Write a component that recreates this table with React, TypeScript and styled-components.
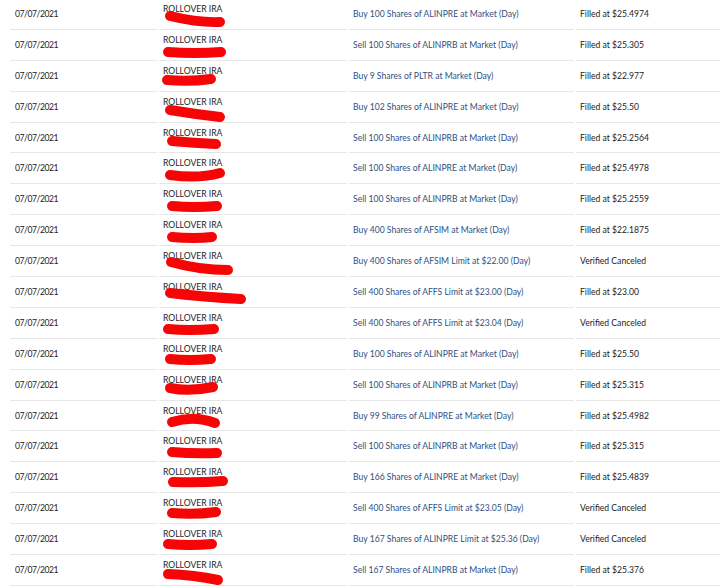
import styled, { createGlobalStyle } from "styled-components";

const GlobalStyle = createGlobalStyle`
  html, body {
    margin: 0;
    padding: 0;
    background: #ffffff;
    overflow: hidden;
  }
  body {
    font-family: Lato, "Open Sans", "Liberation Sans", sans-serif;
  }
`;

interface Order {
  description: string;
  status: string;
  // scribble: start x, start y, control x, control y, end x, end y (cell coords)
  mark: number[];
}

const orders: Order[] = [
  { description: "Buy 100 Shares of ALINPRE at Market (Day)", status: "Filled at $25.4974", mark: [11, 17, 40, 24, 61, 23] },
  { description: "Sell 100 Shares of ALINPRB at Market (Day)", status: "Filled at $25.305", mark: [9, 22, 35, 24, 62, 22] },
  { description: "Buy 9 Shares of PLTR at Market (Day)", status: "Filled at $22.977", mark: [8, 19, 30, 21, 52, 18] },
  { description: "Buy 102 Shares of ALINPRE at Market (Day)", status: "Filled at $25.50", mark: [11, 18, 35, 22, 61, 25] },
  { description: "Sell 100 Shares of ALINPRB at Market (Day)", status: "Filled at $25.2564", mark: [13, 18, 35, 20, 57, 21] },
  { description: "Sell 100 Shares of ALINPRE at Market (Day)", status: "Filled at $25.4978", mark: [11, 22, 40, 26, 61, 20] },
  { description: "Sell 100 Shares of ALINPRB at Market (Day)", status: "Filled at $25.2559", mark: [13, 22, 35, 24, 58, 22] },
  { description: "Buy 400 Shares of AFSIM at Market (Day)", status: "Filled at $22.1875", mark: [13, 22, 35, 24, 53, 22] },
  { description: "Buy 400 Shares of AFSIM Limit at $22.00 (Day)", status: "Verified Canceled", mark: [12, 16, 40, 24, 69, 24] },
  { description: "Sell 400 Shares of AFFS Limit at $23.00 (Day)", status: "Filled at $23.00", mark: [11, 16, 45, 20, 82, 22] },
  { description: "Sell 400 Shares of AFFS Limit at $23.04 (Day)", status: "Verified Canceled", mark: [9, 21, 30, 23, 55, 21] },
  { description: "Buy 100 Shares of ALINPRE at Market (Day)", status: "Filled at $25.50", mark: [11, 20, 30, 22, 52, 20] },
  { description: "Sell 100 Shares of ALINPRB at Market (Day)", status: "Filled at $25.315", mark: [11, 18, 30, 22, 54, 17] },
  { description: "Buy 99 Shares of ALINPRE at Market (Day)", status: "Filled at $25.4982", mark: [13, 21, 35, 14, 56, 22] },
  { description: "Sell 100 Shares of ALINPRB at Market (Day)", status: "Filled at $25.315", mark: [13, 21, 35, 23, 58, 22] },
  { description: "Buy 166 Shares of ALINPRE at Market (Day)", status: "Filled at $25.4839", mark: [14, 20, 40, 21, 64, 19] },
  { description: "Sell 400 Shares of AFFS Limit at $23.05 (Day)", status: "Verified Canceled", mark: [13, 20, 35, 22, 57, 19] },
  { description: "Buy 167 Shares of ALINPRE Limit at $25.36 (Day)", status: "Verified Canceled", mark: [9, 20, 30, 22, 53, 20] },
  { description: "Sell 167 Shares of ALINPRB at Market (Day)", status: "Filled at $25.376", mark: [9, 19, 35, 20, 59, 25] },
];

export default function App() {
  return (
    <>
      <GlobalStyle />
      <Table>
        {orders.map((order, i) => (
          <Row key={i}>
            <DateCell>07/07/2021</DateCell>
            <AccountCell>
              <AccountName>ROLLOVER IRA</AccountName>
              <Scribble width="188" height="31" viewBox="0 0 188 31">
                <path
                  d={`M${order.mark[0]} ${order.mark[1]} Q${order.mark[2]} ${order.mark[3]} ${order.mark[4]} ${order.mark[5]}`}
                  fill="none"
                  stroke="#f50505"
                  strokeWidth={10}
                  strokeLinecap="round"
                />
              </Scribble>
            </AccountCell>
            <DescriptionCell>{order.description}</DescriptionCell>
            <StatusCell>{order.status}</StatusCell>
          </Row>
        ))}
      </Table>
    </>
  );
}

const Table = styled.div`
  display: flex;
  flex-direction: column;
  margin-top: -1px;
  padding-left: 10px;
  width: 710px;
`;

const Row = styled.div`
  display: grid;
  grid-template-columns: 147px 188px 225px 1fr;
  column-gap: 2px;
  height: 30.9px;
`;

const Cell = styled.div`
  display: flex;
  align-items: center;
  padding-left: 5px;
  border-bottom: 1px solid #e6e6e6;
  font-size: 8.6px;
  color: #222222;
  white-space: nowrap;
`;

const DateCell = styled(Cell)`
  letter-spacing: -0.45px;
`;

const AccountCell = styled(Cell)`
  position: relative;
  align-items: flex-start;
  padding-left: 4px;
  padding-top: 5px;
`;

const AccountName = styled.span`
  line-height: 11px;
  color: #1e1e1e;
`;

const Scribble = styled.svg`
  position: absolute;
  left: 0;
  top: 0;
  overflow: visible;
`;

const DescriptionCell = styled(Cell)`
  padding-left: 4px;
  color: #2f4f7f;
`;

const StatusCell = styled(Cell)`
  padding-left: 4px;
`;
